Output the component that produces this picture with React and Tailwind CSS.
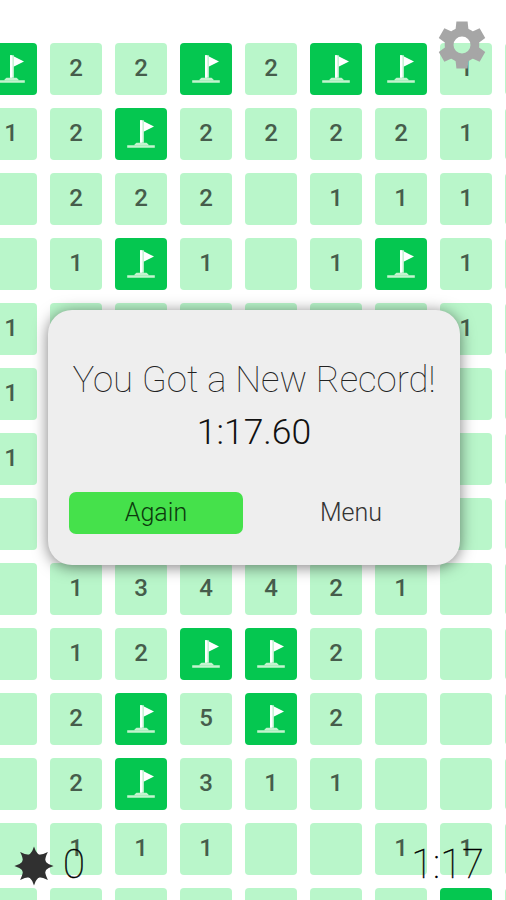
import React from 'react';

// F = flagged cell, . = empty cell, digits = neighbouring mines
const BOARD = [
  'F22F2FF1.',
  '12F22221.',
  '.222.111.',
  '.1F1.1F1.',
  '1......1.',
  '1........',
  '1........',
  '.........',
  '.134421..',
  '.12FF2...',
  '.2F5F2...',
  '.2F311...',
  '.111..11.',
  '.......F.',
];

const FlagIcon = () => (
  <svg viewBox="0 0 52 52" className="block h-[52px] w-[52px]">
    <path d="M28.5 13.2 39 18.6 28.5 23.8z" fill="#fff" />
    <path d="M25 12.3h3.8v22.5H25z" fill="#dcf8e4" />
    <path d="M25 12.3h2v22.5h-2z" fill="#fff" />
    <path d="M19.5 36.4l2-1.6h10l2 1.6v1.2h-14z" fill="#c4f4cf" />
    <path d="M12.2 37.3h27.6v2.4H12.2z" fill="#c4f4cf" />
  </svg>
);

const Cell = ({ value }) => {
  if (value === 'F') {
    return (
      <div className="h-[52px] w-[52px] overflow-hidden rounded-[4px] bg-[#05c750]">
        <FlagIcon />
      </div>
    );
  }
  return (
    <div className="flex h-[52px] w-[52px] items-center justify-center rounded-[4px] bg-[#b9f6ca] pb-[2px] text-[24px] leading-none font-medium text-[#465d4c]">
      {value === '.' ? null : value}
    </div>
  );
};

const GearIcon = () => (
  <svg viewBox="-24 -24 48 48" className="block h-[48px] w-[48px]">
    <g fill="#a6a6a6">
      <path d="M-5.6-23.6H5.6L6.6-14H-6.6zM-5.6 23.6H5.6L6.6 14H-6.6z" />
      <path d="M-5.6-23.6H5.6L6.6-14H-6.6zM-5.6 23.6H5.6L6.6 14H-6.6z" transform="rotate(60)" />
      <path d="M-5.6-23.6H5.6L6.6-14H-6.6zM-5.6 23.6H5.6L6.6 14H-6.6z" transform="rotate(120)" />
    </g>
    <circle r="12.9" fill="none" stroke="#a6a6a6" strokeWidth="8.8" />
  </svg>
);

const MineIcon = () => (
  <svg viewBox="-20 -20 40 40" className="block h-[40px] w-[40px]" fill="#303030">
    <path d="M0-19.6Q1.6-14 4.6-11.2Q8.5-11 13.9-13.9Q11-8.5 11.2-4.6Q14-1.6 19.6 0Q14 1.6 11.2 4.6Q11 8.5 13.9 13.9Q8.5 11 4.6 11.2Q1.6 14 0 19.6Q-1.6 14-4.6 11.2Q-8.5 11-13.9 13.9Q-11 8.5-11.2 4.6Q-14 1.6-19.6 0Q-14-1.6-11.2-4.6Q-11-8.5-13.9-13.9Q-8.5-11-4.6-11.2Q-1.6-14 0-19.6z" />
    <circle r="12.6" />
  </svg>
);

const RecordDialog = () => (
  <div className="absolute top-[310px] left-[48px] flex h-[255px] w-[412px] flex-col rounded-[24px] bg-[#eee] px-[21px] pt-[48px] text-black shadow-[0_2px_15px_rgba(0,0,0,0.5)]">
    <h1 className="text-center text-[36.5px] leading-[44px] font-thin whitespace-nowrap text-[#222]">You Got a New Record!</h1>
    <p className="mt-[8px] text-center text-[35.5px] leading-[44px] font-light text-[#111]">1:17.60</p>
    <div className="mt-[38px] flex gap-[22px]">
      <button className="h-[42px] w-[174px] rounded-[7px] bg-[#45e14b] pb-[1px] text-[25px] leading-none font-light text-[#0c3a0e]">Again</button>
      <button className="h-[42px] w-[172px] pb-[1px] text-[25px] leading-none font-light text-[#333]">Menu</button>
    </div>
  </div>
);

export default function App() {
  return (
    <div className="relative h-[900px] w-[506px] overflow-hidden bg-white font-['Roboto',sans-serif]">
      <div className="-ml-[15px] grid w-[572px] grid-cols-[repeat(9,52px)] gap-x-[13px] gap-y-[13.05px] pt-[42.5px]">
        {BOARD.flatMap((row, y) =>
          row.split('').map((value, x) => <Cell key={`${y}-${x}`} value={value} />)
        )}
      </div>

      <button className="absolute top-[21px] left-[438px]">
        <GearIcon />
      </button>

      <RecordDialog />

      <div className="absolute top-[840px] right-[22px] left-[14px] flex items-center justify-between text-[40px] leading-[50px] text-black">
        <div className="flex items-center gap-[9px]">
          <div className="pt-[2px]">
            <MineIcon />
          </div>
          <span className="font-thin [-webkit-text-stroke:0.4px_black]">0</span>
        </div>
        <span className="font-thin [-webkit-text-stroke:0.3px_black]">1:17</span>
      </div>
    </div>
  );
}
